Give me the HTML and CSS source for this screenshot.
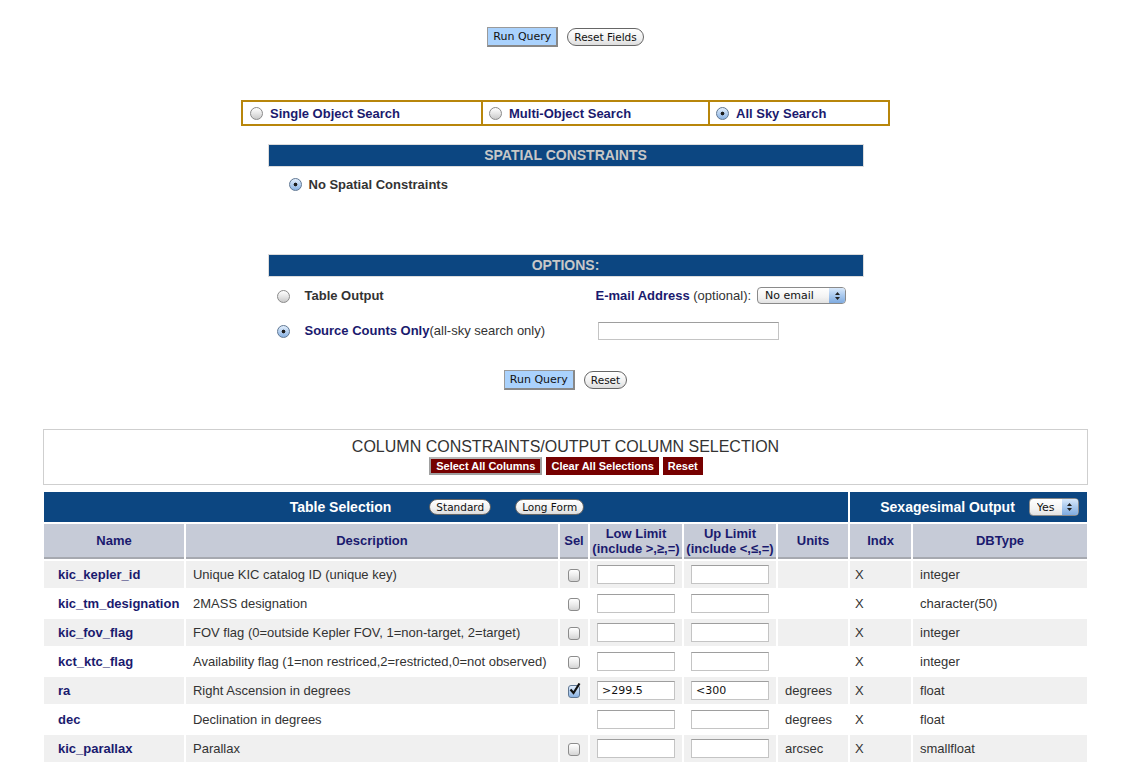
FILE: index.html
```html
<!DOCTYPE html>
<html lang="en">
<head>
    <meta charset="UTF-8">
    <title>Kepler Input Catalog Search</title>
    <link rel="stylesheet" href="styles.css">
</head>
<body>
<div class="page">
    <div class="actions actions-top">
        <button class="btn-run">Run Query</button>
        <button class="btn-pill">Reset Fields</button>
    </div>

    <div class="search-tabs">
        <label class="tab"><span class="radio"></span>Single Object Search</label>
        <label class="tab"><span class="radio"></span>Multi-Object Search</label>
        <label class="tab"><span class="radio checked"></span>All Sky Search</label>
    </div>

    <div class="panel">
        <div class="panel-head">SPATIAL CONSTRAINTS</div>
        <div class="spatial-body">
            <label class="strong"><span class="radio checked"></span>No Spatial Constraints</label>
        </div>
    </div>

    <div class="panel">
        <div class="panel-head">OPTIONS:</div>
        <div class="options-grid">
            <div class="opt-radio"><span class="radio"></span></div>
            <div class="strong">Table Output</div>
            <div class="opt-email">
                <span class="navy strong">E-mail Address</span>&nbsp;(optional):
                <span class="select-wrap email-select">
                    <select><option>No email</option></select>
                    <span class="stepper"><svg width="7" height="10" viewBox="0 0 7 10"><path d="M3.5 1 L6 4 H1 Z M3.5 9 L6 6 H1 Z" fill="#222"/></svg></span>
                </span>
            </div>
            <div class="opt-radio"><span class="radio checked"></span></div>
            <div><span class="navy strong">Source Counts Only</span>(all-sky search only)</div>
            <div><input type="text" class="email-input"></div>
        </div>
    </div>

    <div class="actions actions-mid">
        <button class="btn-run">Run Query</button>
        <button class="btn-pill">Reset</button>
    </div>

    <div class="column-box">
        <div class="column-title">COLUMN CONSTRAINTS/OUTPUT COLUMN SELECTION</div>
        <div class="column-buttons">
            <button class="btn-maroon focused">Select All Columns</button>
            <button class="btn-maroon">Clear All Selections</button>
            <button class="btn-maroon">Reset</button>
        </div>
    </div>

    <table class="columns">
        <colgroup>
            <col style="width:140px">
            <col style="width:372px">
            <col style="width:28px">
            <col style="width:92px">
            <col style="width:92px">
            <col style="width:70px">
            <col style="width:61px">
            <col style="width:174px">
        </colgroup>
        <tr class="bar">
            <td colspan="6" class="bar-left">
                <div class="bar-group">
                    <span>Table Selection</span>
                    <button class="btn-pill small standard">Standard</button>
                    <button class="btn-pill small longform">Long Form</button>
                </div>
            </td>
            <td colspan="2" class="bar-right">
                <div class="bar-group">
                    <span>Sexagesimal Output</span>
                    <span class="select-wrap yes-select">
                        <select><option>Yes</option></select>
                        <span class="stepper"><svg width="7" height="10" viewBox="0 0 7 10"><path d="M3.5 1 L6 4 H1 Z M3.5 9 L6 6 H1 Z" fill="#222"/></svg></span>
                    </span>
                </div>
            </td>
        </tr>
        <tr class="head">
            <th>Name</th>
            <th>Description</th>
            <th>Sel</th>
            <th>Low Limit<br>(include &gt;,&ge;,=)</th>
            <th>Up Limit<br>(include &lt;,&le;,=)</th>
            <th>Units</th>
            <th>Indx</th>
            <th>DBType</th>
        </tr>
        <tr class="odd">
            <td class="name">kic_kepler_id</td>
            <td>Unique KIC catalog ID (unique key)</td>
            <td class="sel"><span class="check"></span></td>
            <td><input type="text" class="limit"></td>
            <td><input type="text" class="limit"></td>
            <td></td>
            <td class="indx">X</td>
            <td>integer</td>
        </tr>
        <tr>
            <td class="name">kic_tm_designation</td>
            <td>2MASS designation</td>
            <td class="sel"><span class="check"></span></td>
            <td><input type="text" class="limit"></td>
            <td><input type="text" class="limit"></td>
            <td></td>
            <td class="indx">X</td>
            <td>character(50)</td>
        </tr>
        <tr class="odd">
            <td class="name">kic_fov_flag</td>
            <td>FOV flag (0=outside Kepler FOV, 1=non-target, 2=target)</td>
            <td class="sel"><span class="check"></span></td>
            <td><input type="text" class="limit"></td>
            <td><input type="text" class="limit"></td>
            <td></td>
            <td class="indx">X</td>
            <td>integer</td>
        </tr>
        <tr>
            <td class="name">kct_ktc_flag</td>
            <td>Availability flag (1=non restriced,2=restricted,0=not observed)</td>
            <td class="sel"><span class="check"></span></td>
            <td><input type="text" class="limit"></td>
            <td><input type="text" class="limit"></td>
            <td></td>
            <td class="indx">X</td>
            <td>integer</td>
        </tr>
        <tr class="odd">
            <td class="name">ra</td>
            <td>Right Ascension in degrees</td>
            <td class="sel">
                <span class="check checked"><svg width="14" height="14" viewBox="0 0 14 14"><path d="M2.5 6.5 L5.5 10 L11.5 0.5" fill="none" stroke="#111" stroke-width="2.2"/></svg></span>
            </td>
            <td><input type="text" class="limit" value="&gt;299.5"></td>
            <td><input type="text" class="limit" value="&lt;300"></td>
            <td>degrees</td>
            <td class="indx">X</td>
            <td>float</td>
        </tr>
        <tr>
            <td class="name">dec</td>
            <td>Declination in degrees</td>
            <td class="sel"></td>
            <td><input type="text" class="limit"></td>
            <td><input type="text" class="limit"></td>
            <td>degrees</td>
            <td class="indx">X</td>
            <td>float</td>
        </tr>
        <tr class="odd">
            <td class="name">kic_parallax</td>
            <td>Parallax</td>
            <td class="sel"><span class="check"></span></td>
            <td><input type="text" class="limit"></td>
            <td><input type="text" class="limit"></td>
            <td>arcsec</td>
            <td class="indx">X</td>
            <td>smallfloat</td>
        </tr>
    </table>
</div>
</body>
</html>
```

FILE: styles.css
```css
body {
    margin: 0;
    font-family: "Liberation Sans", Arial, sans-serif;
    font-size: 13px;
    color: #333;
    background: #fff;
}
.page {
    width: 1131px;
}
.navy {
    color: #1a1a6e;
}
.strong {
    font-weight: bold;
}

/* buttons */
.actions {
    display: flex;
    justify-content: center;
    align-items: center;
    gap: 9px;
}
.actions-top {
    padding-top: 27px;
}
.actions-mid {
    margin-top: 22px;
}
.btn-run {
    height: 20px;
    padding: 0 5px;
    font-family: "DejaVu Sans", sans-serif;
    font-size: 11px;
    color: #111;
    background: #aad2fd;
    border: 1px solid #9a9a9a;
    border-right: 2px solid #888;
    border-bottom: 2px solid #888;
}
.btn-pill {
    height: 18px;
    padding: 0 6px;
    font-family: "DejaVu Sans", sans-serif;
    font-size: 10.5px;
    color: #111;
    background: linear-gradient(#ffffff, #f1f1f1 60%, #dcdcdc);
    border: 1px solid #666;
    border-radius: 9px;
}
.btn-pill.small {
    height: 16px;
    line-height: 14px;
}
.btn-maroon {
    height: 18px;
    padding: 0 5px;
    font-family: "Liberation Sans", Arial, sans-serif;
    font-size: 11px;
    font-weight: bold;
    color: #fff;
    background: #760000;
    border: none;
}
.btn-maroon.focused {
    border: 2px solid #a0a0a0;
    border-top-color: #b8b8b8;
}

/* radios and checks */
.radio {
    display: inline-block;
    box-sizing: border-box;
    width: 13px;
    height: 13px;
    border: 1px solid #8a8a8a;
    border-radius: 50%;
    background: linear-gradient(#ffffff, #e6e6e6 50%, #c9c9c9);
    vertical-align: -2px;
    margin-right: 7px;
}
.radio.checked {
    background: radial-gradient(circle, #1d1d1d 0, #1d1d1d 1.6px, transparent 2.2px),
                linear-gradient(#e2eefc, #b5d0f0 50%, #89b2e3);
    border-color: #5f7793;
}
.check {
    display: inline-block;
    box-sizing: border-box;
    width: 12px;
    height: 13px;
    border: 1px solid #8c8c8c;
    border-radius: 3px;
    background: linear-gradient(#ffffff, #ececec 50%, #d4d4d4);
    vertical-align: middle;
    position: relative;
}
.check.checked {
    background: linear-gradient(#e2eefc, #b5d0f0 50%, #89b2e3);
    border-color: #5f7793;
}
.check svg {
    position: absolute;
    left: -1px;
    top: -3px;
}

/* search type tabs */
.search-tabs {
    width: 645px;
    margin: 53px auto 0;
    display: grid;
    grid-template-columns: 238px 227px 180px;
    border: 2px solid #b8860b;
}
.tab {
    height: 22px;
    line-height: 23px;
    padding-left: 7px;
    font-weight: bold;
    color: #1a1a6e;
}
.tab + .tab {
    border-left: 2px solid #b8860b;
    padding-left: 6px;
}

/* panels */
.panel {
    width: 594px;
    margin: 19px auto 0;
}
.panel + .panel {
    margin-top: 0;
}
.panel-head {
    height: 21px;
    line-height: 21px;
    text-align: center;
    font-size: 14px;
    font-weight: bold;
    color: #c8c8c8;
    background: #0c4681;
    box-shadow: 0 0 0 1px #dcdcdc;
}
.spatial-body {
    box-sizing: border-box;
    height: 89px;
    padding: 11px 0 0 20px;
}
.options-grid {
    display: grid;
    grid-template-columns: 36px 291px 1fr;
    grid-auto-rows: 35px;
    align-items: center;
    padding-top: 2px;
}
.opt-radio {
    padding-left: 8px;
}
.opt-radio .radio {
    margin-right: 0;
    vertical-align: middle;
}
.opt-email {
    display: flex;
    align-items: center;
}
.select-wrap {
    position: relative;
    display: inline-block;
}
.select-wrap select {
    appearance: none;
    -webkit-appearance: none;
    box-sizing: border-box;
    font-family: "DejaVu Sans", sans-serif;
    font-size: 11px;
    color: #111;
    background: linear-gradient(#ffffff, #f3f3f3 60%, #e2e2e2);
    border: 1px solid #8a8a8a;
    border-radius: 4px;
    padding: 0 0 0 7px;
}
.select-wrap .stepper {
    position: absolute;
    right: 1px;
    top: 1px;
    bottom: 1px;
    width: 16px;
    border-radius: 0 3px 3px 0;
    background: linear-gradient(#d9e9fb, #a9c9ee 50%, #7fabe0);
    display: flex;
    align-items: center;
    justify-content: center;
}
.email-select {
    margin-left: 6px;
}
.email-select select {
    width: 89px;
    height: 17px;
}
.email-input {
    box-sizing: border-box;
    width: 181px;
    height: 18px;
    margin-left: 2px;
    border: 1px solid #c4c4c4;
    border-top-color: #9e9e9e;
}

/* column constraints */
.column-box {
    box-sizing: border-box;
    width: 1045px;
    height: 56px;
    margin: 39px auto 0;
    border: 1px solid #cfcfcf;
    text-align: center;
}
.column-title {
    padding-top: 8px;
    font-size: 16px;
    line-height: 18px;
    color: #333;
}
.column-buttons {
    display: flex;
    justify-content: center;
    gap: 4px;
    margin-top: 1px;
    padding-left: 1px;
}

/* main table */
.columns {
    width: 1047px;
    margin: 5px auto 0;
    table-layout: fixed;
    border-spacing: 2px;
}
.columns td,
.columns th {
    padding: 0 0 0 7px;
    height: 27px;
    white-space: nowrap;
    overflow: hidden;
}
.bar td {
    height: 30px;
    background: #0c4681;
    color: #fff;
    font-size: 14px;
    font-weight: bold;
    padding: 0;
}
.bar-group {
    display: flex;
    justify-content: center;
    align-items: center;
}
.bar-left .bar-group {
    padding-right: 18px;
}
.bar-right .bar-group {
    padding-left: 22px;
}
.standard {
    margin-left: 38px;
}
.longform {
    margin-left: 24px;
}
.yes-select {
    margin-left: 14px;
}
.yes-select select {
    width: 50px;
    height: 18px;
}
.head th {
    height: 33px;
    padding: 0;
    text-align: center;
    line-height: 15px;
    color: #1a1a6e;
    background: #c6cbd7;
    border-bottom: 2px solid #a6a9b0;
}
.odd td {
    background: #f0f0f0;
}
.columns td.name {
    padding-left: 14px;
    font-weight: bold;
    color: #1a1a6e;
}
.columns td.sel {
    padding: 0;
    text-align: center;
}
.columns td.indx {
    padding-left: 5px;
}
.limit {
    box-sizing: border-box;
    width: 78px;
    height: 19px;
    padding: 0 4px;
    font-family: "DejaVu Sans", sans-serif;
    font-size: 11px;
    color: #111;
    border: 1px solid #c4c4c4;
    border-top-color: #9e9e9e;
    vertical-align: middle;
}
```
